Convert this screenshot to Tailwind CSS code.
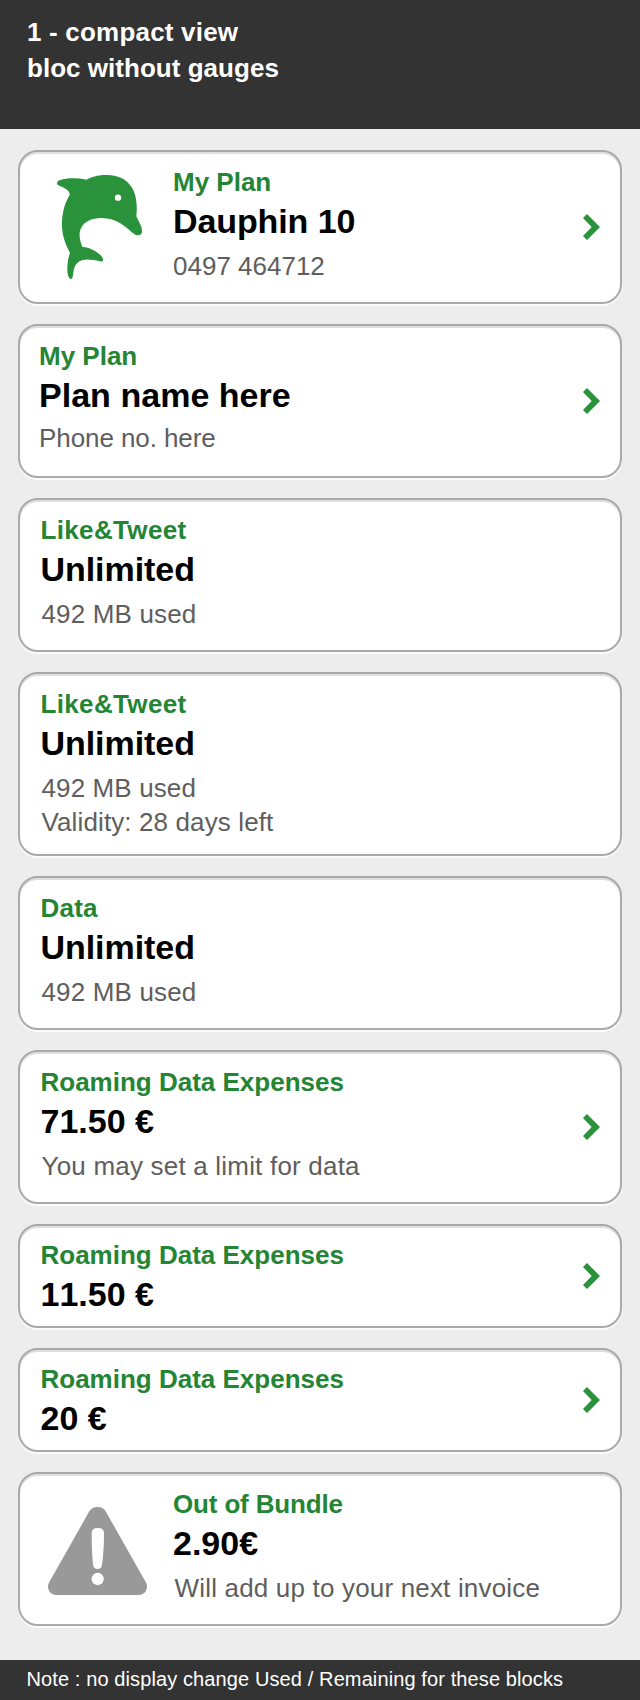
<!DOCTYPE html>
<html lang="en">
<head>
<meta charset="utf-8">
<title>Compact view</title>
<script src="https://cdn.jsdelivr.net/npm/@tailwindcss/browser@4"></script>
</head>
<body class="flex h-[1700px] w-[640px] flex-col bg-[#ededed] font-['Liberation_Sans',Arial,sans-serif]">
<svg class="hidden"><symbol id="chevron" viewBox="0 0 17 26"><path d="M4 0 17 13 4 26 0 22 8.700 13 0 4Z" fill="#29923b"/></symbol></svg>

<header class="h-[129px] shrink-0 bg-[#333] pl-[27px] pt-[14px] text-[26px] leading-[36px] font-bold text-white">
  <p class="tracking-[0.2px]">1 - compact view</p>
  <p class="tracking-[0.03px]">bloc without gauges</p>
</header>

<main class="flex grow flex-col gap-5 px-[18px] pt-[21px]">
  <section class="flex h-[154px] rounded-[20px] border-2 border-[#a9a9a9] bg-white pr-5 shadow-[inset_0_2px_0_#dfdfdf,0_2px_0_#fbfbfb]">
    <svg class="mt-[22px] ml-9 h-[106px] w-[88px] shrink-0" viewBox="138 102 264 318">
      <path fill="#29923b" d="M141 130C141 125 145 122 151 120C171 113 204 114 229 119C244 111 266 104 290 105C324 105 348 117 364 140C378 160 383 193 379 229C384 242 397 258 396 275C396 284 386 288 376 284C363 276 342 252 316 242C292 232 257 231 236 242C207 256 202 286 217 320C242 323 270 337 279 356C281 363 276 366 270 364C243 358 218 354 202 369C190 380 191 397 188 411C186 419 180 418 176 411C168 393 173 358 180 338C158 301 150 257 160 213C164 193 171 179 179 165C180 151 164 144 150 138C144 136 141 134 141 130Z"/>
      <circle cx="324" cy="173" r="9.500" fill="#fff"/>
    </svg>
    <div class="ml-[29px] grow pt-[13px]">
      <h2 class="text-[26px] leading-[34px] font-bold text-[#248535]">My Plan</h2>
      <p class="text-[34px] leading-[44px] font-bold tracking-[-0.1px] text-black">Dauphin 10</p>
      <p class="mt-1.5 text-[26px] leading-[34px] text-[#5e5e5e]">0497 464712</p>
    </div>
    <svg class="h-[26px] w-[17px] shrink-0 self-center"><use href="#chevron"/></svg>
  </section>

  <section class="flex h-[154px] rounded-[20px] border-2 border-[#a9a9a9] bg-white pr-5 pl-[19px] shadow-[inset_0_2px_0_#dfdfdf,0_2px_0_#fbfbfb]">
    <div class="grow pt-[13px]">
      <h2 class="text-[26px] leading-[34px] font-bold text-[#248535]">My Plan</h2>
      <p class="text-[34px] leading-[44px] font-bold tracking-[0.03px] text-black">Plan name here</p>
      <p class="mt-1 text-[26px] leading-[34px] tracking-[-0.08px] text-[#5e5e5e]">Phone no. here</p>
    </div>
    <svg class="h-[26px] w-[17px] shrink-0 self-center"><use href="#chevron"/></svg>
  </section>

  <section class="h-[154px] rounded-[20px] border-2 border-[#a9a9a9] bg-white pt-[13px] pl-[20.5px] shadow-[inset_0_2px_0_#dfdfdf,0_2px_0_#fbfbfb]">
    <h2 class="text-[26px] leading-[34px] font-bold tracking-[0.35px] text-[#248535]">Like&amp;Tweet</h2>
    <p class="text-[34px] leading-[44px] font-bold tracking-[-0.05px] text-black">Unlimited</p>
    <p class="mt-1.5 pl-px text-[26px] leading-[34px] tracking-[0.15px] text-[#5e5e5e]">492 MB used</p>
  </section>

  <section class="h-[184px] rounded-[20px] border-2 border-[#a9a9a9] bg-white pt-[13px] pl-[20.5px] shadow-[inset_0_2px_0_#dfdfdf,0_2px_0_#fbfbfb]">
    <h2 class="text-[26px] leading-[34px] font-bold tracking-[0.35px] text-[#248535]">Like&amp;Tweet</h2>
    <p class="text-[34px] leading-[44px] font-bold tracking-[-0.05px] text-black">Unlimited</p>
    <p class="mt-1.5 pl-px text-[26px] leading-[34px] tracking-[0.12px] text-[#5e5e5e]">492 MB used<br>Validity: 28 days left</p>
  </section>

  <section class="h-[154px] rounded-[20px] border-2 border-[#a9a9a9] bg-white pt-[13px] pl-[20.5px] shadow-[inset_0_2px_0_#dfdfdf,0_2px_0_#fbfbfb]">
    <h2 class="text-[26px] leading-[34px] font-bold tracking-[0.2px] text-[#248535]">Data</h2>
    <p class="text-[34px] leading-[44px] font-bold tracking-[-0.05px] text-black">Unlimited</p>
    <p class="mt-1.5 pl-px text-[26px] leading-[34px] tracking-[0.15px] text-[#5e5e5e]">492 MB used</p>
  </section>

  <section class="flex h-[154px] rounded-[20px] border-2 border-[#a9a9a9] bg-white pr-5 pl-[20.5px] shadow-[inset_0_2px_0_#dfdfdf,0_2px_0_#fbfbfb]">
    <div class="grow pt-[13px]">
      <h2 class="text-[26px] leading-[34px] font-bold text-[#248535]">Roaming Data Expenses</h2>
      <p class="text-[34px] leading-[44px] font-bold text-black">71.50 €</p>
      <p class="mt-1.5 pl-px text-[26px] leading-[34px] tracking-[0.2px] text-[#5e5e5e]">You may set a limit for data</p>
    </div>
    <svg class="h-[26px] w-[17px] shrink-0 self-center"><use href="#chevron"/></svg>
  </section>

  <section class="flex h-[104px] rounded-[20px] border-2 border-[#a9a9a9] bg-white pr-5 pl-[20.5px] shadow-[inset_0_2px_0_#dfdfdf,0_2px_0_#fbfbfb]">
    <div class="grow pt-3">
      <h2 class="text-[26px] leading-[34px] font-bold text-[#248535]">Roaming Data Expenses</h2>
      <p class="text-[34px] leading-[44px] font-bold text-black [font-kerning:none]">11.50 €</p>
    </div>
    <svg class="h-[26px] w-[17px] shrink-0 self-center"><use href="#chevron"/></svg>
  </section>

  <section class="flex h-[104px] rounded-[20px] border-2 border-[#a9a9a9] bg-white pr-5 pl-[20.5px] shadow-[inset_0_2px_0_#dfdfdf,0_2px_0_#fbfbfb]">
    <div class="grow pt-3">
      <h2 class="text-[26px] leading-[34px] font-bold text-[#248535]">Roaming Data Expenses</h2>
      <p class="text-[34px] leading-[44px] font-bold text-black">20 €</p>
    </div>
    <svg class="h-[26px] w-[17px] shrink-0 self-center"><use href="#chevron"/></svg>
  </section>

  <section class="flex h-[154px] rounded-[20px] border-2 border-[#a9a9a9] bg-white shadow-[inset_0_2px_0_#dfdfdf,0_2px_0_#fbfbfb]">
    <svg class="mt-8 ml-[27px] h-[90px] w-[101px] shrink-0" viewBox="141 138 303 270">
      <path fill="#999" d="M268 154Q276 141 293 141Q309 141 317 154L437 366Q442 374 441 382Q438 405 414 405H170Q147 405 144 382Q143 374 148 366Z"/>
      <path fill="#fff" d="M275 219Q275 204 293 204Q312 204 312 219Q312 272 306 314Q304 327 293 327Q281 327 279 314Q275 272 275 219Z"/>
      <circle cx="293" cy="357" r="18.500" fill="#fff"/>
    </svg>
    <div class="ml-[25px] grow pt-[13px]">
      <h2 class="text-[26px] leading-[34px] font-bold tracking-[-0.15px] text-[#248535]">Out of Bundle</h2>
      <p class="text-[34px] leading-[44px] font-bold text-black">2.90€</p>
      <p class="mt-1.5 pl-[1.5px] text-[26px] leading-[34px] tracking-[0.18px] text-[#5e5e5e]">Will add up to your next invoice</p>
    </div>
  </section>
</main>

<footer class="h-10 shrink-0 bg-[#333] pt-px pl-[26.5px] text-[20px] leading-[36px] tracking-[0.11px] text-white">Note : no display change Used / Remaining for these blocks</footer>
</body>
</html>
